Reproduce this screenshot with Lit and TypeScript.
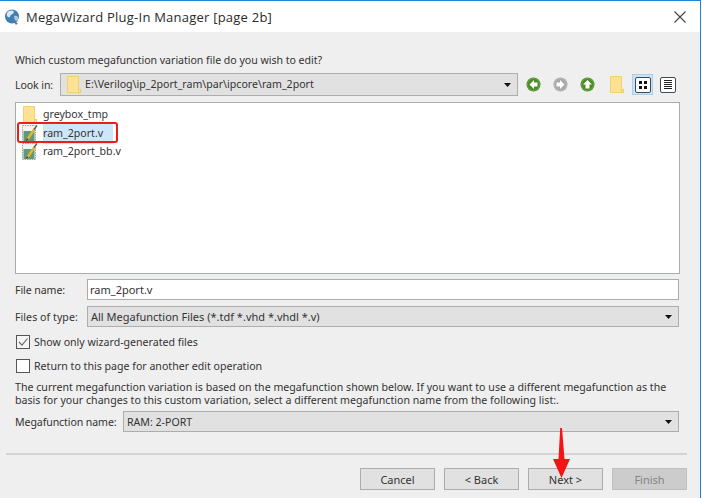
import { LitElement, html, css } from "lit";
import { customElement } from "lit/decorators.js";

const caret = html`<svg class="caret" width="7" height="4" viewBox="0 0 7 4"><path d="M0 0H7L3.5 4Z" fill="#111"/></svg>`;

const folder = html`<svg class="folder" width="14" height="17" viewBox="0 0 14 17">
  <path d="M.5.5H11.5V13.5H13.5V16.5H.5Z" fill="#fde391" stroke="#f3d26e"/>
  <path d="M11.5 13.5H13.5V16.5H11.5Z" fill="#fbe8a8" stroke="#f0cc60"/>
</svg>`;

const fileIcon = html`<svg class="file" width="18" height="19" viewBox="0 0 18 19">
  <path d="M1.5 1.5H14.5V17.5H1.5Z" fill="#f4f4f4" stroke="#9aa5a5" stroke-dasharray="1.6 .8"/>
  <rect x="2.5" y="7" width="11" height="10" fill="#5c9a7a"/>
  <path d="M6 16 L13.5 5" stroke="#e5b52d" stroke-width="2.4"/>
  <path d="M13 5.5 L16 1.5" stroke="#555" stroke-width="1.3"/>
  <path d="M4.8 17 L5.8 14 L7.8 15.4Z" fill="#444"/>
</svg>`;

const navIcon = (color: string, d: string) => html`<svg class="nav" width="15" height="15" viewBox="0 0 15 15">
  <circle cx="7.5" cy="7.5" r="7" fill="${color}"/>
  <circle cx="7.5" cy="7.5" r="6" fill="none" stroke="#ffffff" stroke-opacity=".18"/>
  <path d="${d}" fill="#fff"/>
</svg>`;

@customElement("app-root")
export class AppRoot extends LitElement {
  static styles = css`
    :host {
      display: block;
      width: 702px;
      height: 498px;
      overflow: hidden;
      position: relative;
      font-family: "Noto Sans", "DejaVu Sans", sans-serif;
      font-size: 10.6px;
      color: #333;
      background: #fff;
    }
    .win {
      box-sizing: border-box;
      width: 701px;
      height: 498px;
      border-top: 1px solid #1a86d9;
      border-right: 1px solid #1a86d9;
      display: flex;
      flex-direction: column;
    }
    .title {
      height: 31px;
      flex: none;
      background: #fff;
      display: flex;
      align-items: center;
      padding: 0 14px 0 4px;
      gap: 5px;
    }
    .title span {
      flex: 1;
      font-family: "Open Sans", sans-serif;
      font-size: 13px;
      letter-spacing: 0.23px;
      color: #2b2b2b;
    }
    .body {
      flex: 1;
      background: #efefef;
      display: flex;
      flex-direction: column;
      padding: 0 21px 0 15px;
      position: relative;
    }
    .q { margin-top: 21px; height: 15px; line-height: 15px; letter-spacing: -0.03px; }
    .look {
      margin-top: 5px;
      display: flex;
      align-items: center;
      height: 23px;
    }
    .look label { width: 45px; flex: none; letter-spacing: -0.1px; }
    .combo {
      box-sizing: border-box;
      background: #e1e1e1;
      border: 1px solid #adadad;
      display: flex;
      align-items: center;
      padding: 0 6px 0 3px;
      white-space: nowrap;
    }
    .combo .txt { flex: 1; }
    .path { width: 458px; height: 23px; flex: none; gap: 4px; padding-left: 6px; }
    .path .txt { margin-bottom: 1px; }
    .tools { display: flex; align-items: center; margin-left: 8px; }
    .tools .nav { margin-right: 12px; }
    .tools .folder { margin: 0 9px 0 3px; }
    .vbtn {
      box-sizing: border-box;
      width: 21px;
      height: 21px;
      display: flex;
      align-items: center;
      justify-content: center;
      margin-left: -1px;
    }
    .vbtn.on { background: #cce4f7; border: 1px solid #a6d0f0; margin-right: 5px; }
    .vicon {
      box-sizing: border-box;
      width: 16px;
      height: 16px;
      background: #fff;
      border: 1px solid #3f4a55;
      border-radius: 2px;
      display: flex;
      align-items: center;
      justify-content: center;
    }
    .list {
      box-sizing: border-box;
      margin-top: 6px;
      height: 172px;
      width: 665px;
      background: #fff;
      border: 1px solid #a9adb1;
      padding: 2px 0 0 5px;
      position: relative;
    }
    .item {
      display: flex;
      align-items: center;
      height: 19px;
      width: 100%;
    }
    .item.tight { margin-top: -1px; }
    .item .name { margin-left: 2px; padding-right: 4px; height: 20px; line-height: 19px; }
    .item .ic { width: 18px; display: flex; justify-content: center; flex: none; margin-right: 2px; }
    .item.sel .name { background: #cde6f9; padding-right: 10px; }
    .mark {
      position: absolute;
      left: 1px;
      top: 19px;
      width: 101px;
      height: 21px;
      box-sizing: border-box;
      border: 2.5px solid #ee1c1c;
      border-radius: 3px;
    }
    .row { display: flex; align-items: center; }
    .row label { flex: none; }
    .r-file { margin-top: 5px; height: 21px; }
    .r-file label { width: 72px; letter-spacing: -0.08px; }
    .input {
      box-sizing: border-box;
      width: 593px;
      height: 21px;
      line-height: 19px;
      background: #fff;
      border: 1px solid #a9adb1;
      padding-left: 2px;
      font-size: 11px;
    }
    .r-type { margin-top: 6px; height: 21px; }
    .r-type label { width: 72px; letter-spacing: 0.05px; }
    .r-type .combo { width: 593px; height: 21px; font-size: 11px; }
    .chk {
      margin-top: 8px;
      height: 14px;
      gap: 4px;
      padding-left: 1px;
    }
    .chk.second { margin-top: 10px; }
    .box {
      box-sizing: border-box;
      width: 14px;
      height: 14px;
      background: #fff;
      border: 1px solid #555;
      flex: none;
    }
    .box.on { background: #f4f4f4; }
    .box svg { display: block; }
    .para { margin-top: 8px; line-height: 13.4px; height: 27px; white-space: nowrap; letter-spacing: 0.015px; }
    .r-mega { margin-top: 3px; height: 21px; }
    .r-mega label { width: 108px; letter-spacing: -0.1px; }
    .r-mega .combo { width: 557px; height: 21px; }
    hr {
      border: 0;
      height: 2px;
      background: #d4d4d4;
      margin: 21px -8px 0 -9px;
    }
    .btns {
      display: flex;
      justify-content: flex-end;
      gap: 9px;
      margin: 13px -8px 0 0;
    }
    button {
      box-sizing: border-box;
      width: 75px;
      height: 22px;
      background: #e1e1e1;
      border: 1px solid #adadad;
      font: inherit;
      font-size: 11px;
      color: #333;
      padding: 0;
    }
    button[disabled] { background: #ccc; border-color: #bfbfbf; color: #838383; }
    .arrow { position: absolute; left: 552px; top: 428px; }
    .caret { flex: none; }
  `;

  render() {
    return html`
      <div class="win">
        <div class="title">
          <svg width="17" height="18" viewBox="0 0 17 18">
            <circle cx="8" cy="8.5" r="7" fill="#3f7fb5"/>
            <path d="M3 5 C5 2 9 2 10 4 C9 7 6 6 6 9 C4 10 2 8 3 5Z" fill="#dbe8f2"/>
            <path d="M10 8 C13 7 15 9 14 12 C12 14 10 12 10 8Z" fill="#a9c9e2"/>
            <path d="M9 13 L12 17 L14 15Z" fill="#6a7a88"/>
          </svg>
          <span>MegaWizard Plug-In Manager [page 2b]</span>
          <svg width="12" height="12" viewBox="0 0 12 12"><path d="M.5.5L11.5 11.5M11.5.5L.5 11.5" stroke="#444" stroke-width="1.1" fill="none"/></svg>
        </div>
        <div class="body">
          <div class="q">Which custom megafunction variation file do you wish to edit?</div>
          <div class="look">
            <label>Look in:</label>
            <div class="combo path">${folder}<span class="txt">E:\\Verilog\\ip_2port_ram\\par\\ipcore\\ram_2port</span>${caret}</div>
            <div class="tools">
              ${navIcon("#4a8c24", "M8 3 L3.5 7.5 L8 12 V9.5 H11.5 V5.5 H8Z")}
              ${navIcon("#a7a7a7", "M7 3 L11.5 7.5 L7 12 V9.5 H3.5 V5.5 H7Z")}
              ${navIcon("#4a8c24", "M7.5 3 L12 7.5 H9.5 V11.5 H5.5 V7.5 H3Z")}
              ${folder}
              <div class="vbtn on"><div class="vicon"><svg width="8" height="8" viewBox="0 0 8 8"><path d="M0 0h3v3H0zM5 0h3v3H5zM0 5h3v3H0zM5 5h3v3H5z" fill="#111"/></svg></div></div>
              <div class="vbtn"><div class="vicon"><svg width="8" height="9" viewBox="0 0 8 9"><path d="M0 .5h8M0 2.5h8M0 4.5h8M0 6.5h8M0 8.5h8" stroke="#222"/></svg></div></div>
            </div>
          </div>
          <div class="list">
            <div class="item"><span class="ic">${folder}</span><span class="name">greybox_tmp</span></div>
            <div class="item sel"><span class="ic">${fileIcon}</span><span class="name">ram_2port.v</span></div>
            <div class="item tight"><span class="ic">${fileIcon}</span><span class="name">ram_2port_bb.v</span></div>
            <div class="mark"></div>
          </div>
          <div class="row r-file"><label>File name:</label><div class="input">ram_2port.v</div></div>
          <div class="row r-type"><label>Files of type:</label><div class="combo"><span class="txt">All Megafunction Files (*.tdf *.vhd *.vhdl *.v)</span>${caret}</div></div>
          <div class="row chk"><div class="box on"><svg width="12" height="12" viewBox="0 0 12 12"><path d="M2 6 L5 9.2 L10.5 2.5" fill="none" stroke="#666" stroke-width="1.1"/></svg></div><span>Show only wizard-generated files</span></div>
          <div class="row chk second"><div class="box"></div><span>Return to this page for another edit operation</span></div>
          <div class="para">The current megafunction variation is based on the megafunction shown below. If you want to use a different megafunction as the<br>basis for your changes to this custom variation, select a different megafunction name from the following list:.</div>
          <div class="row r-mega"><label>Megafunction name:</label><div class="combo"><span class="txt">RAM: 2-PORT</span>${caret}</div></div>
          <hr>
          <div class="btns">
            <button>Cancel</button><button>&lt; Back</button><button>Next &gt;</button><button disabled>Finish</button>
          </div>
        </div>
      </div>
      <svg class="arrow" width="20" height="52" viewBox="0 0 20 52"><path d="M8.2 0 H10 L12.5 31 L18 31 L9.5 50 L1 31 L6.5 31Z" fill="#f51414"/></svg>
    `;
  }
}
